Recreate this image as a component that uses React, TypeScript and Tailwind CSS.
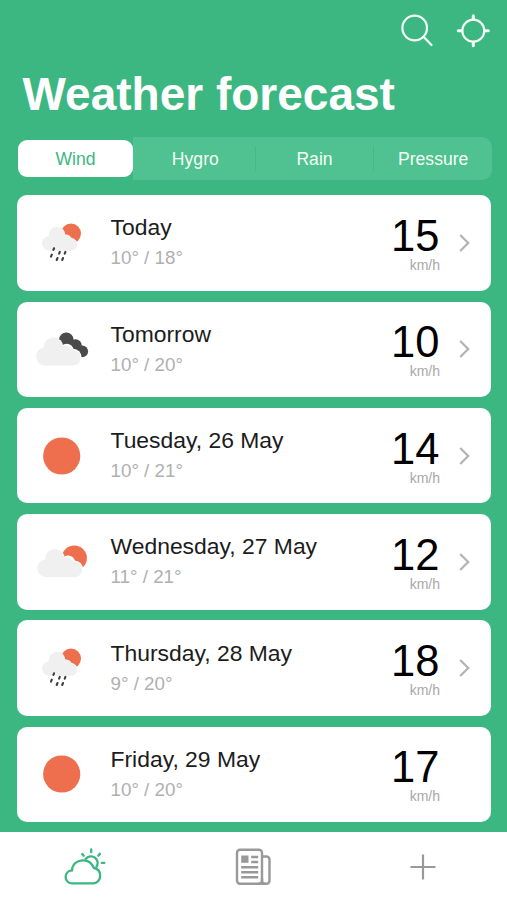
import type { ReactNode } from "react";

const tabs = ["Hygro", "Rain", "Pressure"];

const forecast = [
  { day: "Today", temp: "10° / 18°", wind: 15, icon: "rain", more: true },
  { day: "Tomorrow", temp: "10° / 20°", wind: 10, icon: "overcast", more: true },
  { day: "Tuesday, 26 May", temp: "10° / 21°", wind: 14, icon: "sun", more: true },
  { day: "Wednesday, 27 May", temp: "11° / 21°", wind: 12, icon: "partly", more: true },
  { day: "Thursday, 28 May", temp: "9° / 20°", wind: 18, icon: "rain", more: true },
  { day: "Friday, 29 May", temp: "10° / 20°", wind: 17, icon: "sun", more: false },
];

const BigCloud = () => (
  <>
    <g fill="#fff">
      <circle cx="34.7" cy="27.8" r="7" />
      <circle cx="41" cy="34.4" r="8.6" />
    </g>
    <g fill="#f0f0f0">
      <circle cx="21.6" cy="24.2" r="9.9" />
      <circle cx="13" cy="33.6" r="9" />
      <circle cx="33.5" cy="28.4" r="6" />
      <circle cx="41" cy="34.9" r="7.7" />
      <rect x="13" y="26" width="28" height="16.6" />
    </g>
  </>
);

const weatherIcons: Record<string, ReactNode> = {
  sun: <circle cx="29.7" cy="26" r="18.6" fill="#ee6f4e" />,
  partly: (
    <>
      <circle cx="42.3" cy="22.1" r="12.6" fill="#ee6f4e" />
      <g transform="translate(1.4 -1.4)">
        <BigCloud />
      </g>
    </>
  ),
  overcast: (
    <>
      <g fill="#4a4a4a">
        <circle cx="34.3" cy="17" r="7.4" />
        <circle cx="43.5" cy="22.5" r="6.2" />
        <circle cx="50.2" cy="28.4" r="5.9" />
        <circle cx="42" cy="26" r="6" />
      </g>
      <BigCloud />
    </>
  ),
  rain: (
    <>
      <circle cx="39" cy="16.6" r="10" fill="#ee6f4e" />
      <g fill="#fff">
        <circle cx="34.4" cy="22.6" r="5.2" />
        <circle cx="39" cy="27.6" r="6.6" />
      </g>
      <g fill="#f0f0f0">
        <circle cx="25" cy="18" r="8.3" />
        <circle cx="17.2" cy="26.5" r="7.2" />
        <circle cx="33.4" cy="22.8" r="5" />
        <circle cx="39.2" cy="27.8" r="5.9" />
        <rect x="17.2" y="20" width="22" height="13.7" />
      </g>
      <path
        d="M22 31.3l-.6 1.6M27.8 34.9l-.7 1.8M33.4 34.9l-.7 1.8M19.8 37.6l-.8 2M25.5 41l-.8 2M31 41l-.8 2"
        stroke="#3f3f3f"
        strokeWidth="2.1"
        strokeLinecap="round"
      />
    </>
  ),
};

function Header() {
  return (
    <header className="pr-4 pl-[17px]">
      <div className="flex h-[62px] items-start justify-end gap-5 pt-[13px]">
        <svg className="h-9 w-9" viewBox="0 0 36 36" fill="none" stroke="#f4fff6" strokeWidth="2.2" strokeLinecap="round">
          <circle cx="15.7" cy="15" r="12.3" />
          <path d="M24.5 23.8L32.5 32" />
        </svg>
        <svg className="h-9 w-9" viewBox="0 0 36 36" fill="none" stroke="#f4fff6" strokeWidth="2.2" strokeLinecap="round">
          <circle cx="18.3" cy="17.7" r="11" />
          <path strokeWidth="3" d="M18.3 2.7v3.5M18.3 29.2v3.5M3.3 17.7h3.5M29.8 17.7h3.5" />
        </svg>
      </div>
      <h1 className="ml-[5.5px] h-[75px] pt-[9px] text-[46px] leading-[46px] font-bold whitespace-nowrap text-white">
        Weather forecast
      </h1>
    </header>
  );
}

function Tabs() {
  return (
    <nav className="mr-[15px] ml-[18px] flex h-[43px] text-[17.6px]">
      <button className="my-[3px] w-[115px] rounded-[9px] bg-white pt-px text-[#3cb782]">Wind</button>
      <div className="flex flex-1 rounded-r-[10px] bg-[#50c190] pl-[3px]">
        {tabs.map((tab, i) => (
          <div key={tab} className="flex flex-1 items-center">
            {i > 0 && <span className="h-[25px] w-px bg-[#43ba86]" />}
            <button className="flex-1 pt-0.5 text-[#f4fff6]">{tab}</button>
          </div>
        ))}
      </div>
    </nav>
  );
}

export default function App() {
  return (
    <div className="flex h-[900px] w-[507px] flex-col overflow-hidden bg-[#3cb782] font-['Liberation_Sans',Arial,sans-serif]">
      <Header />
      <Tabs />

      <main className="mt-[15.3px] mr-4 ml-[17px] flex flex-1 flex-col gap-[10.9px]">
        {forecast.map((item) => (
          <div key={item.day} className="flex h-[95.4px] shrink-0 items-center rounded-[10px] bg-white pl-[15px]">
            <svg className="h-[52px] w-[60px]" viewBox="0 0 60 52" fill="none">
              {weatherIcons[item.icon]}
            </svg>
            <div className="ml-[18.5px] flex-1">
              <p className="text-[22.9px] leading-[30px] text-[#1c1c1c]">{item.day}</p>
              <p className="pt-px text-[18.8px] leading-[30px] text-[#b0b0b0]">{item.temp}</p>
            </div>
            <div className="text-right">
              <p className="pr-[0.5px] text-[43.5px] leading-[44px] text-black">{item.wind}</p>
              <p className="text-[14px] leading-[14px] text-[#a8a8a8]">km/h</p>
            </div>
            <div className="mr-5 ml-[17px] w-[14px]">
              {item.more && (
                <svg className="h-5 w-[14px]" viewBox="0 0 14 20" fill="none" stroke="#b4b4b4" strokeWidth="2.3">
                  <path d="M3.2 2l8 8-8 8" />
                </svg>
              )}
            </div>
          </div>
        ))}
      </main>

      <footer className="grid h-[68px] shrink-0 grid-cols-3 place-items-center bg-white">
        <svg className="mr-0.5 h-10 w-11" viewBox="0 0 44 40" fill="none" stroke="#3cb782" strokeWidth="2.3" strokeLinecap="round">
          <path d="M10 37.3H31C35.5 37.3 38.2 33.5 38.2 29.7C38.2 25.5 35.5 22.7 32 22C30 17.5 26 14.3 21.5 14.3C15 14.3 10.5 18 10 24.3C6 24.5 3.6 27.5 3.6 31C3.6 34.5 6.5 37.3 10 37.3z" />
          <path d="M23.6 13A6.7 6.7 0 1 1 34.3 21.2" />
          <path d="M29.2 3.5v2.7M20.2 8l1.5 1.7M36.3 9.700l1.700-1.900M39.800 16.900h2.500" />
        </svg>
        <svg className="mr-px h-10 w-10" viewBox="0 0 40 40" fill="none" stroke="#999" strokeWidth="2.4">
          <rect x="4" y="3.8" width="25" height="34" rx="3" />
          <path d="M29 10.5h4.5a3 3 0 0 1 3 3v21a3.2 3.2 0 0 1-3.2 3.3H25" />
          <path d="M29 32v2.5a3.2 3.2 0 0 0 3.2 3.3" />
          <path d="M18.2 11h7M18.2 16h7M8.2 21.2h17M8.2 26.2h17M8.2 31.3h17" />
          <rect x="8.2" y="9.5" width="7.3" height="7.3" fill="#999" stroke="none" />
        </svg>
        <svg className="mt-0.5 h-[26px] w-[26px]" viewBox="0 0 26 26" stroke="#999" strokeWidth="2.2">
          <path d="M13 .5v25M.5 13h25" />
        </svg>
      </footer>
    </div>
  );
}
